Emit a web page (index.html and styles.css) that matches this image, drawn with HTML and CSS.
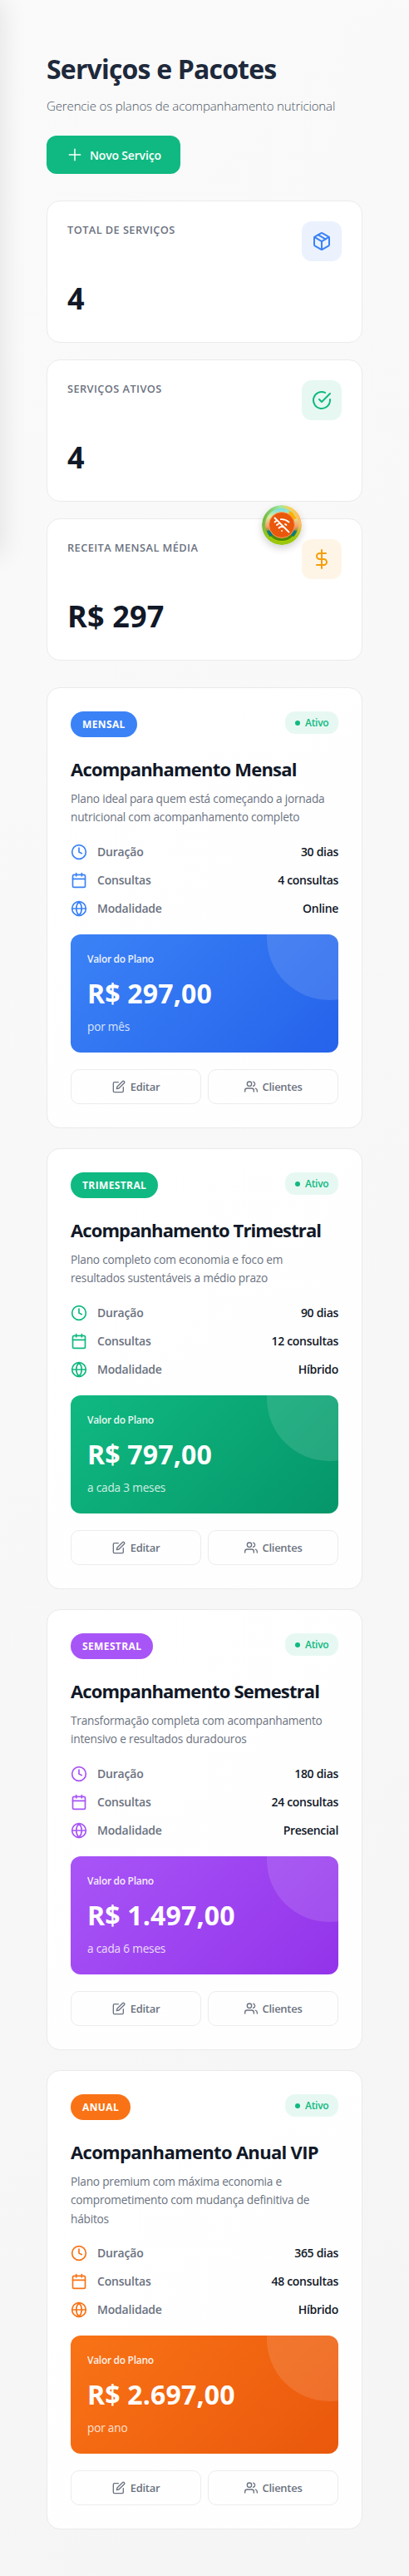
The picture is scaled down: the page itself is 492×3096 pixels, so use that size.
FILE: index.html
```html
<!DOCTYPE html>
<html lang="pt-BR">
<head>
<meta charset="utf-8">
<meta name="viewport" content="width=device-width, initial-scale=1">
<title>Serviços e Pacotes</title>
<link rel="stylesheet" href="styles.css">
</head>
<body>
<svg class="sprite" width="0" height="0" aria-hidden="true">
  <symbol id="plus" viewBox="0 0 24 24"><path d="M12 4v16M4 12h16"/></symbol>
  <symbol id="package" viewBox="0 0 24 24"><path d="m16.5 9.4-9-5.19"/><path d="M21 16V8a2 2 0 0 0-1-1.73l-7-4a2 2 0 0 0-2 0l-7 4A2 2 0 0 0 3 8v8a2 2 0 0 0 1 1.73l7 4a2 2 0 0 0 2 0l7-4A2 2 0 0 0 21 16z"/><path d="M3.27 6.96 12 12.01l8.73-5.05M12 22.08V12"/></symbol>
  <symbol id="check" viewBox="0 0 24 24"><path d="M22 11.08V12a10 10 0 1 1-5.93-9.14"/><path d="m9 11 3 3L22 4"/></symbol>
  <symbol id="dollar" viewBox="0 0 24 24"><path d="M12 1v22M17 5H9.5a3.5 3.5 0 0 0 0 7h5a3.5 3.5 0 0 1 0 7H6"/></symbol>
  <symbol id="clock" viewBox="0 0 24 24"><circle cx="12" cy="12" r="10"/><path d="M12 6v6l4 2"/></symbol>
  <symbol id="calendar" viewBox="0 0 24 24"><rect x="3" y="4" width="18" height="18" rx="2"/><path d="M16 2v4M8 2v4M3 10h18"/></symbol>
  <symbol id="globe" viewBox="0 0 24 24"><circle cx="12" cy="12" r="10"/><path d="M2 12h20M12 2a15.3 15.3 0 0 1 4 10 15.3 15.3 0 0 1-4 10 15.3 15.3 0 0 1-4-10 15.3 15.3 0 0 1 4-10z"/></symbol>
  <symbol id="edit" viewBox="0 0 24 24"><path d="M11 4H4a2 2 0 0 0-2 2v14a2 2 0 0 0 2 2h14a2 2 0 0 0 2-2v-7"/><path d="M18.5 2.5a2.121 2.121 0 0 1 3 3L12 15l-4 1 1-4 9.5-9.5z"/></symbol>
  <symbol id="users" viewBox="0 0 24 24"><path d="M17 21v-2a4 4 0 0 0-4-4H5a4 4 0 0 0-4 4v2"/><circle cx="9" cy="7" r="4"/><path d="M23 21v-2a4 4 0 0 0-3-3.87M16 3.13a4 4 0 0 1 0 7.75"/></symbol>
</svg>
<aside class="drawer"></aside>
<main class="page">
  <header class="head">
    <h1 class="head-title">Serviços e Pacotes</h1>
    <p class="head-sub">Gerencie os planos de acompanhamento nutricional</p>
    <button class="new-btn"><svg class="icon i20"><use href="#plus"/></svg><span>Novo Serviço</span></button>
  </header>
  <section class="stats">
    <article class="stat">
      <div class="stat-top"><span class="stat-label">TOTAL DE SERVIÇOS</span><span class="stat-icon blue"><svg class="icon i24"><use href="#package"/></svg></span></div>
      <strong class="stat-value">4</strong>
    </article>
    <article class="stat">
      <div class="stat-top"><span class="stat-label">SERVIÇOS ATIVOS</span><span class="stat-icon green"><svg class="icon i24"><use href="#check"/></svg></span></div>
      <strong class="stat-value">4</strong>
    </article>
    <article class="stat">
      <div class="stat-top"><span class="stat-label">RECEITA MENSAL MÉDIA</span><span class="stat-icon amber"><svg class="icon i24"><use href="#dollar"/></svg></span></div>
      <strong class="stat-value">R$ 297</strong>
      <svg class="offline" viewBox="0 0 48 48">
        <defs>
          <linearGradient id="rim" x1="0" y1="0" x2="1" y2="0"><stop offset="0" stop-color="#6fb536"/><stop offset=".45" stop-color="#9be8a4"/><stop offset=".7" stop-color="#f7d254"/><stop offset="1" stop-color="#ffb868"/></linearGradient>
          <linearGradient id="rimfade" x1="0" y1="0" x2="0" y2="1"><stop offset=".45" stop-color="#9ac70e" stop-opacity="0"/><stop offset=".85" stop-color="#9ac70e"/></linearGradient>
          <linearGradient id="scene" x1="0" y1="0" x2="0" y2="1"><stop offset="0" stop-color="#72dcf0"/><stop offset=".25" stop-color="#d8ee9a"/><stop offset=".55" stop-color="#f79a70"/><stop offset=".75" stop-color="#4c8a12"/><stop offset="1" stop-color="#4f8d00"/></linearGradient>
        </defs>
        <circle cx="24" cy="24" r="24" fill="url(#rim)"/>
        <circle cx="24" cy="24" r="24" fill="url(#rimfade)"/>
        <circle cx="24" cy="24" r="20" fill="url(#scene)"/>
        <path d="M33 7l4 2 5 7-5 2-5-6z" fill="#ffb000"/>
        <path d="M6 31l5-1 2 6-3 2zM42 31l-5-1-2 6 3 2z" fill="#087b83"/>
        <path d="M10 38a20 20 0 0 0 28 0" fill="none" stroke="#a9cf00" stroke-width="1.5"/>
        <circle cx="24" cy="24" r="15.5" fill="#ea580c" stroke="#f7a15f"/>
        <g fill="none" stroke="#fff" stroke-width="1.8" stroke-linecap="round"><path d="M15.5 15.5 32.5 32.5M24 31h.01M20.500 27.500a5 5 0 0 1 5-1.200M18 24a9 9 0 0 1 3.500-2.100M29.500 24a9 9 0 0 0-1.500-1M15.500 20.500a13 13 0 0 1 3.100-2.100M32.500 20.500a13 13 0 0 0-9.700-3.300"/></g>
      </svg>
    </article>
  </section>
  <section class="plans">
    <article class="plan plan-blue">
      <div class="plan-top"><span class="tag">MENSAL</span><span class="status"><i></i><span>Ativo</span></span></div>
      <h2 class="plan-title">Acompanhamento Mensal</h2>
      <p class="plan-desc">Plano ideal para quem está começando a jornada<br>nutricional com acompanhamento completo</p>
      <ul class="facts">
        <li><svg class="icon i20"><use href="#clock"/></svg><span>Duração</span><b>30 dias</b></li>
        <li><svg class="icon i20"><use href="#calendar"/></svg><span>Consultas</span><b>4 consultas</b></li>
        <li><svg class="icon i20"><use href="#globe"/></svg><span>Modalidade</span><b>Online</b></li>
      </ul>
      <div class="price"><span class="price-label">Valor do Plano</span><strong class="price-value">R$ 297,00</strong><span class="price-per">por mês</span></div>
      <div class="actions"><button><svg class="icon i16"><use href="#edit"/></svg><span>Editar</span></button><button><svg class="icon i16"><use href="#users"/></svg><span>Clientes</span></button></div>
    </article>
    <article class="plan plan-green">
      <div class="plan-top"><span class="tag">TRIMESTRAL</span><span class="status"><i></i><span>Ativo</span></span></div>
      <h2 class="plan-title">Acompanhamento Trimestral</h2>
      <p class="plan-desc">Plano completo com economia e foco em<br>resultados sustentáveis a médio prazo</p>
      <ul class="facts">
        <li><svg class="icon i20"><use href="#clock"/></svg><span>Duração</span><b>90 dias</b></li>
        <li><svg class="icon i20"><use href="#calendar"/></svg><span>Consultas</span><b>12 consultas</b></li>
        <li><svg class="icon i20"><use href="#globe"/></svg><span>Modalidade</span><b>Híbrido</b></li>
      </ul>
      <div class="price"><span class="price-label">Valor do Plano</span><strong class="price-value">R$ 797,00</strong><span class="price-per">a cada 3 meses</span></div>
      <div class="actions"><button><svg class="icon i16"><use href="#edit"/></svg><span>Editar</span></button><button><svg class="icon i16"><use href="#users"/></svg><span>Clientes</span></button></div>
    </article>
    <article class="plan plan-purple">
      <div class="plan-top"><span class="tag">SEMESTRAL</span><span class="status"><i></i><span>Ativo</span></span></div>
      <h2 class="plan-title">Acompanhamento Semestral</h2>
      <p class="plan-desc">Transformação completa com acompanhamento<br>intensivo e resultados duradouros</p>
      <ul class="facts">
        <li><svg class="icon i20"><use href="#clock"/></svg><span>Duração</span><b>180 dias</b></li>
        <li><svg class="icon i20"><use href="#calendar"/></svg><span>Consultas</span><b>24 consultas</b></li>
        <li><svg class="icon i20"><use href="#globe"/></svg><span>Modalidade</span><b>Presencial</b></li>
      </ul>
      <div class="price"><span class="price-label">Valor do Plano</span><strong class="price-value">R$ 1.497,00</strong><span class="price-per">a cada 6 meses</span></div>
      <div class="actions"><button><svg class="icon i16"><use href="#edit"/></svg><span>Editar</span></button><button><svg class="icon i16"><use href="#users"/></svg><span>Clientes</span></button></div>
    </article>
    <article class="plan plan-orange">
      <div class="plan-top"><span class="tag">ANUAL</span><span class="status"><i></i><span>Ativo</span></span></div>
      <h2 class="plan-title">Acompanhamento Anual VIP</h2>
      <p class="plan-desc">Plano premium com máxima economia e<br>comprometimento com mudança definitiva de<br>hábitos</p>
      <ul class="facts">
        <li><svg class="icon i20"><use href="#clock"/></svg><span>Duração</span><b>365 dias</b></li>
        <li><svg class="icon i20"><use href="#calendar"/></svg><span>Consultas</span><b>48 consultas</b></li>
        <li><svg class="icon i20"><use href="#globe"/></svg><span>Modalidade</span><b>Híbrido</b></li>
      </ul>
      <div class="price"><span class="price-label">Valor do Plano</span><strong class="price-value">R$ 2.697,00</strong><span class="price-per">por ano</span></div>
      <div class="actions"><button><svg class="icon i16"><use href="#edit"/></svg><span>Editar</span></button><button><svg class="icon i16"><use href="#users"/></svg><span>Clientes</span></button></div>
    </article>
  </section>
</main>
</body>
</html>
```
FILE: styles.css
```css
*, *::before, *::after { box-sizing: border-box; }
body { margin: 0; font-family: "Segoe UI", "Open Sans", "Noto Sans", sans-serif; color: #111827; background: #f8f8f8; }
h1, h2, p, ul { margin: 0; padding: 0; }
button { font-family: inherit; margin: 0; }
.sprite { position: absolute; }
.icon { flex: none; fill: none; stroke: currentColor; stroke-width: 2; stroke-linecap: round; stroke-linejoin: round; }
.i16 { width: 16px; height: 16px; }
.i20 { width: 20px; height: 20px; }
.i24 { width: 24px; height: 24px; }

.drawer { position: absolute; left: -280px; top: 0; width: 280px; height: 667px; box-shadow: 4px 0 28px rgba(0, 0, 0, .09); }
.page { min-height: 3096px; padding: 62px 56px 56px; background: linear-gradient(135deg, #fafafa 0%, #f5f5f5 100%); }

.head { display: flex; flex-direction: column; align-items: flex-start; height: 179px; }
.head-title { font-size: 32px; line-height: 42px; font-weight: 700; letter-spacing: -.82px; color: #1e293b; white-space: nowrap; }
.head-sub { margin-top: 11px; font-size: 15px; line-height: 24px; font-weight: 300; color: #4b5563; letter-spacing: -.13px; white-space: nowrap; }
.new-btn { display: flex; align-items: center; gap: 8px; margin-top: 24px; width: 161px; height: 46px; padding: 0 24px; border: 0; border-radius: 12px; background: #10b981; color: #fff; font-size: 14px; font-weight: 600; letter-spacing: -.17px; white-space: nowrap; }
.new-btn .icon { stroke-width: 1.8; }

.stats { display: grid; gap: 20px; }
.stat { position: relative; height: 171px; padding: 24px; border: 1px solid #ebebeb; border-radius: 16px; background: #fff; }
.stat-top { display: flex; justify-content: space-between; align-items: flex-start; height: 72px; }
.stat-label { font-size: 12.8px; line-height: 20px; font-weight: 600; letter-spacing: .42px; color: #6b7280; white-space: nowrap; }
.stat-icon { display: grid; place-items: center; width: 48px; height: 48px; border-radius: 12px; }
.blue { color: #3b82f6; background: #ebf2fe; }
.green { color: #10b981; background: #e7f8f2; }
.amber { color: #f59e0b; background: #fef5e7; }
.stat-value { display: block; font-size: 36px; line-height: 42px; font-weight: 700; letter-spacing: .2px; }
.offline { position: absolute; left: 258px; top: -17px; width: 48px; height: 48px; border-radius: 50%; box-shadow: 0 4px 10px rgba(0, 0, 0, .18); }

.plans { display: grid; gap: 24px; margin-top: 32px; }
.plan { padding: 28px; border: 1px solid #e9eaec; border-radius: 16px; background: linear-gradient(135deg, #fff, #fefefe); }
.plan-blue { --accent: #3b82f6; --deep: #2563eb; --track: -.79px; }
.plan-green { --accent: #10b981; --deep: #059669; --track: -.9px; }
.plan-purple { --accent: #a855f7; --deep: #9333ea; --track: -.84px; }
.plan-orange { --accent: #f97316; --deep: #ea580c; --track: -.68px; }
.plan-top { display: flex; justify-content: space-between; align-items: flex-start; height: 51px; }
.tag { height: 31px; padding: 0 14px; border-radius: 16px; background: var(--accent); color: #fff; font-size: 12px; line-height: 31px; font-weight: 700; letter-spacing: .38px; }
.status { display: flex; align-items: center; gap: 6px; width: 64px; height: 27px; padding: 0 12px; border-radius: 12px; background: #e7f8f2; color: #10b981; font-size: 12px; font-weight: 600; letter-spacing: -.3px; }
.status i { flex: none; width: 6px; height: 6px; border-radius: 50%; background: currentColor; }
.plan-title { height: 43px; font-size: 22px; line-height: 36px; font-weight: 700; letter-spacing: var(--track); white-space: nowrap; }
.plan-desc { font-size: 13.7px; line-height: 22.4px; color: #6b7280; letter-spacing: -.22px; white-space: nowrap; }
.facts { display: grid; gap: 14px; margin-top: 20.2px; list-style: none; }
.facts li { display: flex; align-items: center; height: 20px; font-size: 14px; line-height: 20px; color: #6b7280; font-weight: 550; letter-spacing: -.2px; }
.facts .icon { color: var(--accent); margin-right: 12px; }
.facts b { margin-left: auto; font-weight: 550; letter-spacing: -.3px; color: #111827; }
.price { position: relative; display: flex; flex-direction: column; height: 142px; margin-top: 21px; padding: 20px; overflow: hidden; border-radius: 12px; background: linear-gradient(135deg, var(--accent), var(--deep)); color: #fff; white-space: nowrap; }
.price::before { content: ""; position: absolute; top: -71px; right: -64px; width: 150px; height: 150px; border-radius: 50%; background: rgba(255, 255, 255, .12); }
.price-label { font-size: 12px; line-height: 19px; font-weight: 600; letter-spacing: -.3px; opacity: .9; }
.price-value { margin-top: 10px; font-size: 32px; line-height: 44px; font-weight: 700; letter-spacing: .18px; }
.price-per { margin-top: 8px; font-size: 13.6px; line-height: 20px; letter-spacing: -.18px; opacity: .8; }
.actions { display: grid; grid-template-columns: 1fr 1fr; gap: 8px; margin-top: 20px; }
.actions button { display: flex; align-items: center; justify-content: center; gap: 6px; height: 42px; padding: 0; border: 1px solid #ececee; border-radius: 10px; background: transparent; color: #6b7280; font-size: 13px; font-weight: 600; letter-spacing: -.28px; }
```
